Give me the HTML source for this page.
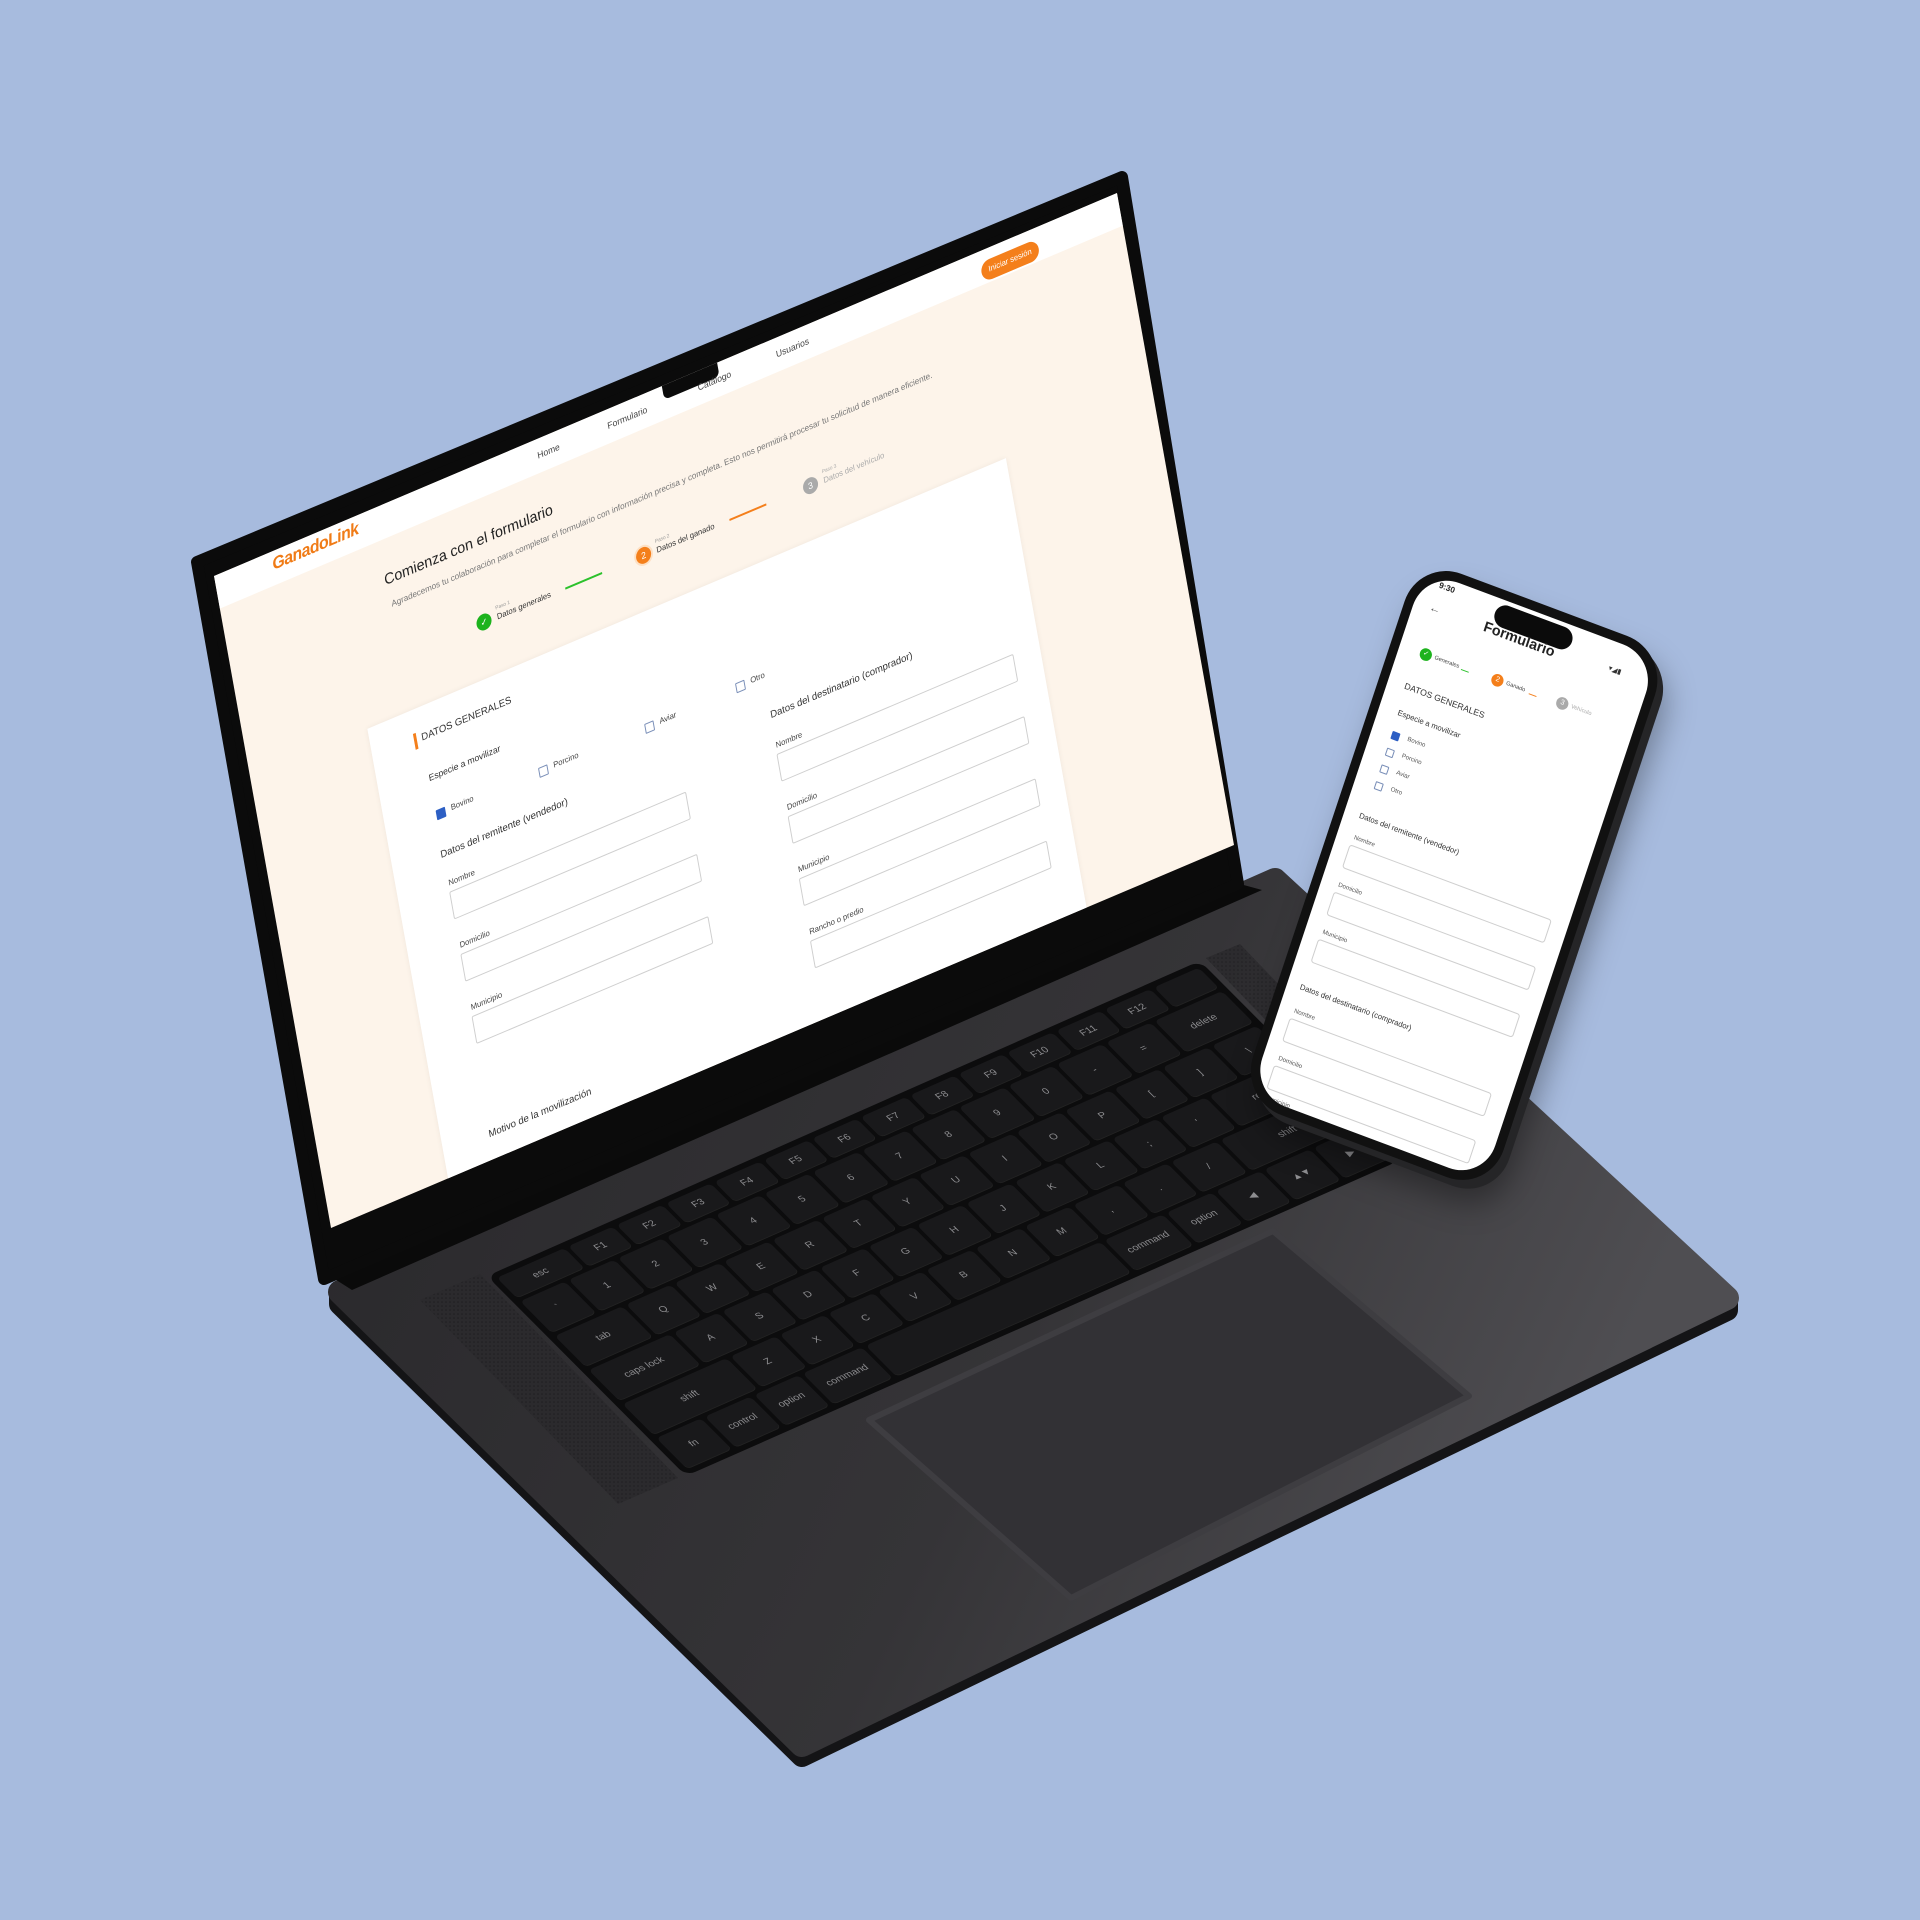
<!DOCTYPE html>
<html><head><meta charset="utf-8">
<style>
html,body{margin:0;padding:0;}
body{width:1920px;height:1920px;background:#a7bbde;position:relative;overflow:hidden;font-family:"Liberation Sans",sans-serif;}
svg.bg{position:absolute;left:0;top:0;}
.scr{position:absolute;left:0;top:0;width:980px;height:660px;transform-origin:0 0;transform:matrix(0.9214,-0.3908,0.1773,0.9879,214,576);background:#fdf4ea;overflow:hidden;}
.abs{position:absolute;white-space:nowrap;}
.hdr{position:absolute;left:0;top:0;width:980px;height:33px;background:#fff;}
.logo{color:#f07b16;font-weight:bold;font-style:italic;font-size:17px;letter-spacing:-0.5px;}
.nav{font-size:9px;color:#444;}
.btn{background:#f47f1b;color:#fff;font-size:8px;border-radius:10px;width:62px;height:20px;line-height:20px;text-align:center;}
.circ{border-radius:50%;color:#fff;font-size:9px;text-align:center;}
.card{position:absolute;left:127px;top:205px;width:693px;height:520px;background:#fff;box-shadow:0 0 6px rgba(0,0,0,0.06);}
.lbl{font-size:8px;color:#444;}
.inp{border:1px solid #cfcfcf;border-radius:2px;background:#fff;}
.cb{width:8px;height:8px;border:1px solid #7a8fb8;border-radius:1px;background:#fff;}
.kb{position:absolute;left:0;top:0;width:780px;height:282px;transform-origin:0 0;transform:matrix(0.914,-0.404,0.706,0.709,487,1276);background:#0c0c0d;border-radius:10px;box-sizing:border-box;padding:6px;display:flex;flex-direction:column;gap:4px;}
.row{display:flex;gap:4px;}
.row div{background:#19191b;border-radius:5px;color:#8d8d90;font-size:10px;display:flex;align-items:center;justify-content:center;flex:1;box-shadow:inset 0 -1px 0 #222;}
.r0{height:30px}.rN{height:45px}
.ph{position:absolute;left:0;top:0;width:260px;height:550px;transform-origin:0 0;transform:matrix(0.963,0.3605,-0.3275,0.984,1419,558);}
.pbody{position:absolute;left:0;top:0;width:260px;height:550px;background:#111;border-radius:44px;box-shadow:8px 6px 0 #252527,14px 18px 30px rgba(0,0,0,0.35);}
.pscr{position:absolute;left:9px;top:9px;width:242px;height:532px;background:#fff;border-radius:36px;overflow:hidden;}
.pl{font-size:6px;color:#555;}
.pi{border:1px solid #cfcfcf;border-radius:3px;}
</style></head><body>
<svg class="bg" width="1920" height="1920" viewBox="0 0 1920 1920">
<defs>
<linearGradient id="bt" x1="0" y1="0" x2="1" y2="0.3">
<stop offset="0" stop-color="#29282b"/><stop offset="0.6" stop-color="#353437"/><stop offset="1" stop-color="#4f4e52"/>
</linearGradient>
<pattern id="spk" width="4" height="4" patternUnits="userSpaceOnUse"><rect width="4" height="4" fill="#2a292c"/><circle cx="2" cy="2" r="0.8" fill="#1a1a1c"/></pattern>
</defs>
<polygon points="340,1304 802,1756 1727,1310 1727,1298 802,1745 340,1292" fill="#141416" stroke="#141416" stroke-width="22" stroke-linejoin="round"/>
<polygon points="340,1292 1275,880 1727,1298 802,1745" fill="url(#bt)" stroke="url(#bt)" stroke-width="24" stroke-linejoin="round"/>
<polygon points="420,1300 480,1274 678,1478 618,1504" fill="url(#spk)" opacity="0.8"/>
<polygon points="1206,958 1240,944 1428,1140 1394,1154" fill="url(#spk)" opacity="0.8"/>
<polygon points="869,1420 1273,1231 1469,1396 1071,1598" fill="#323135" stroke="#3e3d41" stroke-width="6" stroke-linejoin="round"/>
<polygon points="330,1276 1240,884 1262,890 352,1290" fill="#0a0a0a"/>
<polygon points="197,562 1122,177 1238,884 324,1279" fill="#0b0b0b" stroke="#0b0b0b" stroke-width="12" stroke-linejoin="round"/>
</svg>

<div class="kb">
<div class="row r0"><div style="flex:1.5">esc</div><div>F1</div><div>F2</div><div>F3</div><div>F4</div><div>F5</div><div>F6</div><div>F7</div><div>F8</div><div>F9</div><div>F10</div><div>F11</div><div>F12</div><div></div></div>
<div class="row rN"><div>`</div><div>1</div><div>2</div><div>3</div><div>4</div><div>5</div><div>6</div><div>7</div><div>8</div><div>9</div><div>0</div><div>-</div><div>=</div><div style="flex:1.5">delete</div></div>
<div class="row rN"><div style="flex:1.5">tab</div><div>Q</div><div>W</div><div>E</div><div>R</div><div>T</div><div>Y</div><div>U</div><div>I</div><div>O</div><div>P</div><div>[</div><div>]</div><div>\</div></div>
<div class="row rN"><div style="flex:1.8">caps lock</div><div>A</div><div>S</div><div>D</div><div>F</div><div>G</div><div>H</div><div>J</div><div>K</div><div>L</div><div>;</div><div>'</div><div style="flex:1.8">return</div></div>
<div class="row rN"><div style="flex:2.3">shift</div><div>Z</div><div>X</div><div>C</div><div>V</div><div>B</div><div>N</div><div>M</div><div>,</div><div>.</div><div>/</div><div style="flex:2.3">shift</div></div>
<div class="row rN"><div>fn</div><div>control</div><div>option</div><div style="flex:1.3">command</div><div style="flex:5.2"></div><div style="flex:1.3">command</div><div>option</div><div>◀</div><div>▲▼</div><div>▶</div></div>
</div>

<div class="scr">
 <div class="hdr"></div>
 <div class="abs" style="left:486px;top:-6px;width:60px;height:20px;background:#0b0b0b;border-radius:0 0 6px 6px;"></div>
 <div class="abs logo" style="left:61px;top:3px;">GanadoLink</div>
 <div class="abs nav" style="left:348px;top:11px;">Home</div>
 <div class="abs nav" style="left:424px;top:11px;">Formulario</div>
 <div class="abs nav" style="left:522px;top:11px;">Catálogo</div>
 <div class="abs nav" style="left:607px;top:11px;">Usuarios</div>
 <div class="abs btn" style="left:829px;top:11px;">Iniciar sesión</div>

 <div class="abs" style="left:171px;top:64px;font-size:15px;color:#222;">Comienza con el formulario</div>
 <div class="abs" style="left:174px;top:92px;font-size:8.5px;color:#777;">Agradecemos tu colaboración para completar el formulario con información precisa y completa. Esto nos permitirá procesar tu solicitud de manera eficiente.</div>

 <div class="abs circ" style="left:256px;top:143px;width:16px;height:16px;line-height:16px;background:#1db31d;">✓</div>
 <div class="abs" style="left:278px;top:140px;font-size:5px;color:#999;">Paso 1</div>
 <div class="abs" style="left:278px;top:147px;font-size:8px;color:#333;">Datos generales</div>
 <div class="abs" style="left:352px;top:151px;width:40px;height:1.5px;background:#2cc12c;"></div>
 <div class="abs circ" style="left:429px;top:144px;width:16px;height:16px;line-height:16px;background:#f47f1b;box-shadow:0 0 0 2px #fde0c4;">2</div>
 <div class="abs" style="left:451px;top:141px;font-size:5px;color:#999;">Paso 2</div>
 <div class="abs" style="left:451px;top:148px;font-size:8px;color:#333;">Datos del ganado</div>
 <div class="abs" style="left:530px;top:152px;width:40px;height:1.5px;background:#f47f1b;"></div>
 <div class="abs circ" style="left:610px;top:145px;width:16px;height:16px;line-height:16px;background:#aaa;">3</div>
 <div class="abs" style="left:632px;top:142px;font-size:5px;color:#aaa;">Paso 3</div>
 <div class="abs" style="left:632px;top:149px;font-size:8px;color:#aaa;">Datos del vehículo</div>

 <div class="card">
  <div class="abs" style="left:45px;top:23px;width:3px;height:16px;background:#f47f1b;"></div>
  <div class="abs" style="left:53px;top:25px;font-size:10px;color:#333;">DATOS GENERALES</div>
  <div class="abs" style="left:53px;top:66px;font-size:9px;color:#333;">Especie a movilizar</div>
  <div class="abs cb" style="left:54px;top:104px;background:#2d5fc4;border-color:#2d5fc4;"></div>
  <div class="abs lbl" style="left:70px;top:103px;">Bovino</div>
  <div class="abs cb" style="left:165px;top:105px;"></div>
  <div class="abs lbl" style="left:181px;top:104px;">Porcino</div>
  <div class="abs cb" style="left:280px;top:106px;"></div>
  <div class="abs lbl" style="left:296px;top:105px;">Aviar</div>
  <div class="abs cb" style="left:379px;top:104px;"></div>
  <div class="abs lbl" style="left:395px;top:103px;">Otro</div>

  <div class="abs" style="left:51px;top:143px;font-size:10px;color:#333;">Datos del remitente (vendedor)</div>
  <div class="abs lbl" style="left:54px;top:173px;">Nombre</div>
  <div class="abs inp" style="left:53px;top:186px;width:255px;height:26px;"></div>
  <div class="abs lbl" style="left:54px;top:236px;">Domicilio</div>
  <div class="abs inp" style="left:53px;top:249px;width:255px;height:26px;"></div>
  <div class="abs lbl" style="left:54px;top:299px;">Municipio</div>
  <div class="abs inp" style="left:53px;top:312px;width:255px;height:26px;"></div>

  <div class="abs" style="left:409px;top:143px;font-size:10px;color:#333;">Datos del destinatario (comprador)</div>
  <div class="abs lbl" style="left:409px;top:174px;">Nombre</div>
  <div class="abs inp" style="left:408px;top:187px;width:255px;height:26px;"></div>
  <div class="abs lbl" style="left:409px;top:237px;">Domicilio</div>
  <div class="abs inp" style="left:408px;top:250px;width:255px;height:26px;"></div>
  <div class="abs lbl" style="left:409px;top:300px;">Municipio</div>
  <div class="abs inp" style="left:408px;top:313px;width:255px;height:26px;"></div>
  <div class="abs lbl" style="left:409px;top:363px;">Rancho o predio</div>
  <div class="abs inp" style="left:408px;top:376px;width:255px;height:26px;"></div>

  <div class="abs" style="left:49px;top:425px;font-size:10px;color:#333;">Motivo de la movilización</div>
 </div>
</div>

<div class="ph">
 <div class="pbody"></div>
 <div class="pscr">
  <div class="abs" style="left:18px;top:4px;font-size:8px;font-weight:bold;color:#222;">9:30</div>
  <div class="abs" style="left:78px;top:4px;width:80px;height:22px;background:#0b0b0b;border-radius:12px;"></div>
  <div class="abs" style="left:200px;top:22px;font-size:7px;color:#333;">▾◢▮</div>
  <div class="abs" style="left:16px;top:26px;font-size:11px;color:#555;">←</div>
  <div class="abs" style="left:72px;top:22px;font-size:14px;font-weight:bold;color:#222;">Formulario</div>

  <div class="abs circ" style="left:21px;top:70px;width:12px;height:12px;line-height:12px;font-size:7px;background:#1db31d;">✓</div>
  <div class="abs" style="left:36px;top:73px;font-size:5.5px;color:#444;">Generales</div>
  <div class="abs" style="left:64px;top:77px;width:8px;height:1px;background:#2cc12c;"></div>
  <div class="abs circ" style="left:95px;top:69px;width:12px;height:12px;line-height:12px;font-size:7px;background:#f47f1b;">2</div>
  <div class="abs" style="left:110px;top:72px;font-size:5.5px;color:#444;">Ganado</div>
  <div class="abs" style="left:134px;top:76px;width:8px;height:1px;background:#f47f1b;"></div>
  <div class="abs circ" style="left:162px;top:68px;width:12px;height:12px;line-height:12px;font-size:7px;background:#aaa;">3</div>
  <div class="abs" style="left:177px;top:71px;font-size:5.5px;color:#aaa;">Vehículo</div>

  <div class="abs" style="left:17px;top:106px;font-size:8.5px;color:#333;">DATOS GENERALES</div>
  <div class="abs" style="left:19px;top:133px;font-size:7.5px;color:#333;">Especie a movilizar</div>
  <div class="abs cb" style="left:20px;top:156px;width:6px;height:6px;background:#2d5fc4;border-color:#2d5fc4;"></div>
  <div class="abs pl" style="left:36px;top:156px;">Bovino</div>
  <div class="abs cb" style="left:20px;top:173px;width:6px;height:6px;"></div>
  <div class="abs pl" style="left:36px;top:173px;">Porcino</div>
  <div class="abs cb" style="left:20px;top:190px;width:6px;height:6px;"></div>
  <div class="abs pl" style="left:36px;top:190px;">Aviar</div>
  <div class="abs cb" style="left:20px;top:207px;width:6px;height:6px;"></div>
  <div class="abs pl" style="left:36px;top:207px;">Otro</div>

  <div class="abs" style="left:15px;top:239px;font-size:7.5px;color:#333;">Datos del remitente (vendedor)</div>
  <div class="abs pl" style="left:17px;top:263px;">Nombre</div>
  <div class="abs pi" style="left:15px;top:273px;width:208px;height:22px;"></div>
  <div class="abs pl" style="left:17px;top:311px;">Domicilio</div>
  <div class="abs pi" style="left:15px;top:321px;width:208px;height:22px;"></div>
  <div class="abs pl" style="left:17px;top:359px;">Municipio</div>
  <div class="abs pi" style="left:15px;top:369px;width:208px;height:22px;"></div>
  <div class="abs" style="left:13px;top:414px;font-size:7.5px;color:#333;">Datos del destinatario (comprador)</div>
  <div class="abs pl" style="left:15px;top:440px;">Nombre</div>
  <div class="abs pi" style="left:13px;top:450px;width:208px;height:22px;"></div>
  <div class="abs pl" style="left:15px;top:488px;">Domicilio</div>
  <div class="abs pi" style="left:13px;top:498px;width:208px;height:22px;"></div>
  <div class="abs pl" style="left:15px;top:528px;">Municipio</div>
 </div>
</div>
</body></html>
